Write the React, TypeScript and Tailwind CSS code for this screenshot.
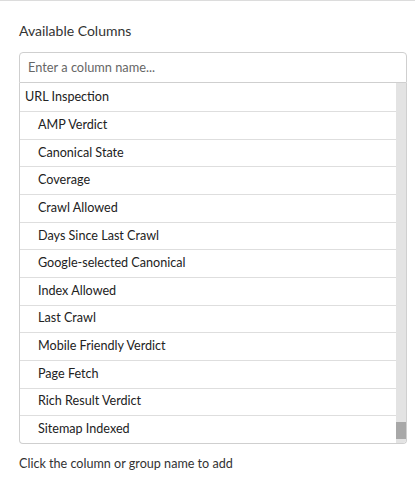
import React from "react";

const items = [
  "AMP Verdict",
  "Canonical State",
  "Coverage",
  "Crawl Allowed",
  "Days Since Last Crawl",
  "Google-selected Canonical",
  "Index Allowed",
  "Last Crawl",
  "Mobile Friendly Verdict",
  "Page Fetch",
  "Rich Result Verdict",
  "Sitemap Indexed",
];

export default function App() {
  return (
    <div
      className="w-[415px] h-[484px] bg-white border-t border-[#dcdcdc] pl-[19px] pr-[8px] overflow-hidden"
      style={{ fontFamily: "Lato, 'Open Sans', sans-serif" }}
    >
      <div className="pt-[21px] text-[14px] leading-[18px] text-[#333]">Available Columns</div>
      <div className="mt-[12px] w-[388px]">
        <div className="h-[31px] border border-[#cfcfcf] rounded-t-[4px] flex items-center pl-[8px] text-[12.8px] text-[#666]">
          Enter a column name...
        </div>
        <div className="flex border-x border-b border-[#cfcfcf] rounded-b-[4px] overflow-hidden">
          <div className="flex-1 flex flex-col">
            <div className="h-[28px] flex items-center pl-[5px] text-[12.6px] text-[#222]">URL Inspection</div>
            {items.map((it) => (
              <div
                key={it}
                className="h-[27.67px] border-t border-[#dedede] flex items-center pl-[18px] text-[12.6px] text-[#222]"
              >
                {it}
              </div>
            ))}
          </div>
          <div className="w-[10px] bg-[#e3e3e3] flex flex-col justify-end">
            <div className="h-[17px] mb-[4px] bg-[#a8a8a8]" />
          </div>
        </div>
      </div>
      <div className="mt-[11px] text-[12.6px] leading-[18px] text-[#333]">Click the column or group name to add</div>
    </div>
  );
}
